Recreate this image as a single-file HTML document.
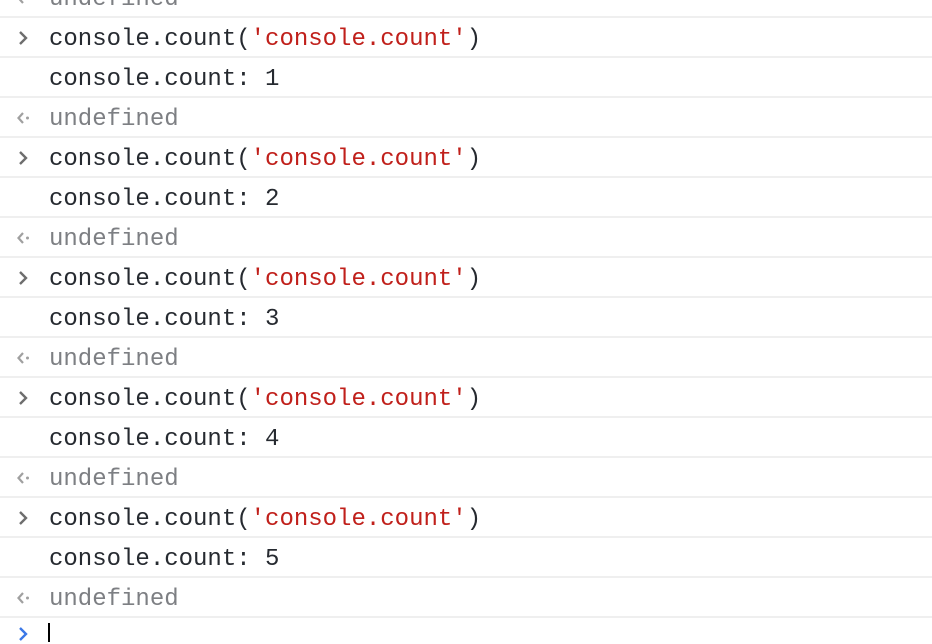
<!DOCTYPE html>
<html><head><style>
body{margin:0;width:932px;height:644px;overflow:hidden;background:#fff;font-family:"Liberation Mono",monospace;font-size:24px;}
.wrap{position:absolute;top:-22px;left:0;width:932px}
.r{height:38px;border-bottom:2px solid #efefef;position:relative;line-height:38px;padding-left:49px;color:#262a30;white-space:pre}
.t{position:relative;top:3px}
.r svg{position:absolute;left:15px;top:12px}
.u{color:#7d7f83}
.s{color:#c0201b}
.cur{position:absolute;left:48px;top:623px;width:2px;height:19px;background:#000}
</style></head><body>
<div class="wrap">
<div class="r u"><svg width="16" height="16"><path d="M8 3L3.5 8L8 13" stroke="#a0a0a0" stroke-width="2.2" fill="none"/><circle cx="12.5" cy="8" r="1.5" fill="#a0a0a0"/></svg><span class="t">undefined</span></div>
<div class="r"><svg width="16" height="16"><path d="M5 2L11 8L5 14" stroke="#6e6e6e" stroke-width="2.4" fill="none"/></svg><span class="t">console.count(<span class="s">'console.count'</span>)</span></div>
<div class="r"><span class="t">console.count: 1</span></div>
<div class="r u"><svg width="16" height="16"><path d="M8 3L3.5 8L8 13" stroke="#a0a0a0" stroke-width="2.2" fill="none"/><circle cx="12.5" cy="8" r="1.5" fill="#a0a0a0"/></svg><span class="t">undefined</span></div>
<div class="r"><svg width="16" height="16"><path d="M5 2L11 8L5 14" stroke="#6e6e6e" stroke-width="2.4" fill="none"/></svg><span class="t">console.count(<span class="s">'console.count'</span>)</span></div>
<div class="r"><span class="t">console.count: 2</span></div>
<div class="r u"><svg width="16" height="16"><path d="M8 3L3.5 8L8 13" stroke="#a0a0a0" stroke-width="2.2" fill="none"/><circle cx="12.5" cy="8" r="1.5" fill="#a0a0a0"/></svg><span class="t">undefined</span></div>
<div class="r"><svg width="16" height="16"><path d="M5 2L11 8L5 14" stroke="#6e6e6e" stroke-width="2.4" fill="none"/></svg><span class="t">console.count(<span class="s">'console.count'</span>)</span></div>
<div class="r"><span class="t">console.count: 3</span></div>
<div class="r u"><svg width="16" height="16"><path d="M8 3L3.5 8L8 13" stroke="#a0a0a0" stroke-width="2.2" fill="none"/><circle cx="12.5" cy="8" r="1.5" fill="#a0a0a0"/></svg><span class="t">undefined</span></div>
<div class="r"><svg width="16" height="16"><path d="M5 2L11 8L5 14" stroke="#6e6e6e" stroke-width="2.4" fill="none"/></svg><span class="t">console.count(<span class="s">'console.count'</span>)</span></div>
<div class="r"><span class="t">console.count: 4</span></div>
<div class="r u"><svg width="16" height="16"><path d="M8 3L3.5 8L8 13" stroke="#a0a0a0" stroke-width="2.2" fill="none"/><circle cx="12.5" cy="8" r="1.5" fill="#a0a0a0"/></svg><span class="t">undefined</span></div>
<div class="r"><svg width="16" height="16"><path d="M5 2L11 8L5 14" stroke="#6e6e6e" stroke-width="2.4" fill="none"/></svg><span class="t">console.count(<span class="s">'console.count'</span>)</span></div>
<div class="r"><span class="t">console.count: 5</span></div>
<div class="r u"><svg width="16" height="16"><path d="M8 3L3.5 8L8 13" stroke="#a0a0a0" stroke-width="2.2" fill="none"/><circle cx="12.5" cy="8" r="1.5" fill="#a0a0a0"/></svg><span class="t">undefined</span></div>
</div>
<svg style="position:absolute;left:15px;top:626px" width="16" height="16"><path d="M5 2L11 8L5 14" stroke="#3b78e7" stroke-width="2.4" fill="none"/></svg>
<div class="cur"></div>
</body></html>
